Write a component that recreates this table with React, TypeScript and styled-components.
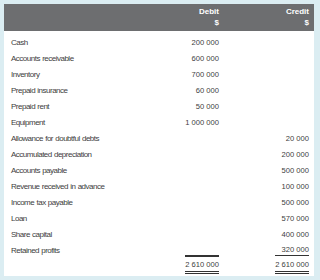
import React from "react";
import styled, { createGlobalStyle } from "styled-components";

const Global = createGlobalStyle`
  html, body { margin: 0; padding: 0; background: #dbedf2; }
  body { font-family: "Liberation Sans", Arial, sans-serif; }
`;

const Frame = styled.div`
  width: 320px;
  height: 280px;
  box-sizing: border-box;
  padding: 4px 6px 4px 4px;
  background: #dbedf2;
`;

const Panel = styled.div`
  background: #ffffff;
  padding-bottom: 2px;
`;

const Grid = styled.div`
  display: grid;
  grid-template-columns: 1fr 60px 90px;
  padding-right: 5px;
`;

const Header = styled(Grid)`
  background: #6d6e70;
  height: 27px;
  box-sizing: border-box;
  padding-top: 3px;
`;

const HeadCell = styled.div<{ $col: number }>`
  grid-column: ${(p) => p.$col};
  text-align: right;
  color: #ffffff;
  font-weight: bold;
  font-size: 8px;
  line-height: 10.5px;
`;

const Body = styled.div`
  padding-top: 3px;
`;

const Row = styled(Grid)`
  height: 16px;
  align-items: center;
`;

const Label = styled.div`
  padding-left: 7px;
  font-size: 8px;
  letter-spacing: -0.5px;
  word-spacing: 0.5px;
  color: #404040;
  white-space: nowrap;
`;

const Cell = styled.div`
  display: flex;
  justify-content: flex-end;
  align-items: center;
  height: 16px;
`;

type Rule = "none" | "under" | "blank" | "total";

const borders: Record<Rule, string> = {
  none: "none",
  under: "1px solid #333333",
  blank: "2px solid #333333",
  total: "3px double #333333",
};

const Figure = styled.span<{ $rule: Rule }>`
  display: inline-block;
  min-width: ${(p) => (p.$rule === "none" ? "0" : "34px")};
  text-align: right;
  font-size: 7.6px;
  line-height: 11px;
  color: #404040;
  white-space: nowrap;
  border-bottom: ${(p) => borders[p.$rule]};
  padding-bottom: ${(p) => (p.$rule === "total" ? "1px" : "0")};
`;

type Line = {
  label: string;
  debit?: string;
  credit?: string;
  debitRule?: Rule;
  creditRule?: Rule;
};

const lines: Line[] = [
  { label: "Cash", debit: "200 000" },
  { label: "Accounts receivable", debit: "600 000" },
  { label: "Inventory", debit: "700 000" },
  { label: "Prepaid insurance", debit: "60 000" },
  { label: "Prepaid rent", debit: "50 000" },
  { label: "Equipment", debit: "1 000 000" },
  { label: "Allowance for doubtful debts", credit: "20 000" },
  { label: "Accumulated depreciation", credit: "200 000" },
  { label: "Accounts payable", credit: "500 000" },
  { label: "Revenue received in advance", credit: "100 000" },
  { label: "Income tax payable", credit: "500 000" },
  { label: "Loan", credit: "570 000" },
  { label: "Share capital", credit: "400 000" },
  {
    label: "Retained profits",
    debit: "\u00a0",
    credit: "320 000",
    debitRule: "blank",
    creditRule: "under",
  },
  {
    label: "",
    debit: "2 610 000",
    credit: "2 610 000",
    debitRule: "total",
    creditRule: "total",
  },
];

export default function App() {
  return (
    <Frame>
      <Global />
      <Panel>
        <Header>
          <HeadCell $col={2}>
            Debit
            <br />$
          </HeadCell>
          <HeadCell $col={3}>
            Credit
            <br />$
          </HeadCell>
        </Header>
        <Body>
          {lines.map((l, i) => (
            <Row key={i}>
              <Label>{l.label}</Label>
              <Cell>
                {l.debit !== undefined && (
                  <Figure $rule={l.debitRule ?? "none"}>{l.debit}</Figure>
                )}
              </Cell>
              <Cell>
                {l.credit !== undefined && (
                  <Figure $rule={l.creditRule ?? "none"}>{l.credit}</Figure>
                )}
              </Cell>
            </Row>
          ))}
        </Body>
      </Panel>
    </Frame>
  );
}
